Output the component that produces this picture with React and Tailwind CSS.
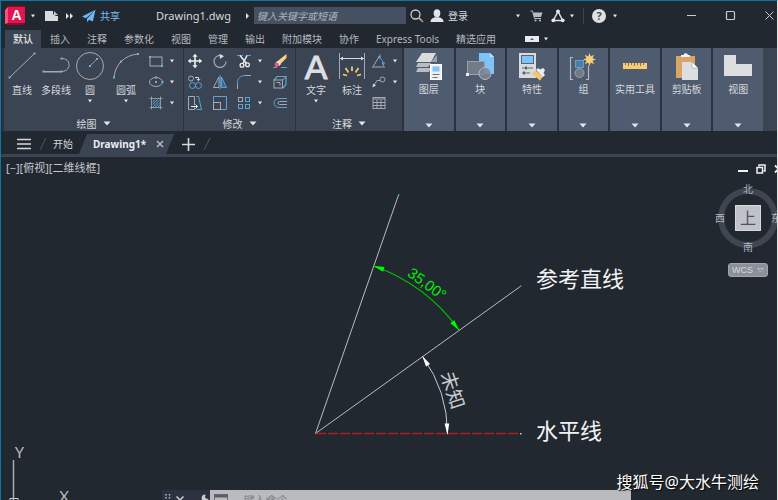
import React from "react";

function Caret({ big = false, className = "" }) {
  return big ? (
    <svg width="8" height="5" viewBox="0 0 8 5" className={className} aria-hidden="true">
      <path d="M.5.5h7L4 4.5z" fill="#e3e5e8" />
    </svg>
  ) : (
    <svg width="6" height="4" viewBox="0 0 6 4" className={className} aria-hidden="true">
      <path d="M1 .5h4L3 3.5z" fill="#e3e5e8" />
    </svg>
  );
}

function Icon({ w = 16, h = 16, children, className = "" }) {
  return (
    <svg
      width={w}
      height={h}
      viewBox={`0 0 ${w} ${h}`}
      fill="none"
      className={`block shrink-0 ${className}`}
      aria-hidden="true"
    >
      {children}
    </svg>
  );
}

function Dot({ x, y }) {
  return <rect x={x - 1} y={y - 1} width="2" height="2" fill="#62b5f0" />;
}

const GREY = "#a6abb3";
const BLUE = "#5aa2d8";

/* ---------- Title bar ---------- */

function TitleBar() {
  return (
    <header className="flex h-[29px] shrink-0 items-center pl-1">
      <button aria-label="应用程序菜单" className="flex items-center">
        <span className="relative flex h-5 w-[21px] items-center justify-center">
          <Icon w={21} h={20} className="absolute inset-0">
            <path d="M3 0h17v17l-3 2H1L0 4z" fill="#8e0b2e" />
            <path d="M3 1h17v16H3z" fill="#e4134f" />
            <path d="M3 1 0 4v14l3-1z" fill="#f0557d" />
          </Icon>
          <span className="relative pb-0.5 pl-0.5 font-['Liberation_Sans',sans-serif] text-[14px] font-bold leading-4 text-white">
            A
          </span>
        </span>
        <Caret className="ml-1" />
      </button>
      <button aria-label="新建" className="ml-2">
        <Icon w={15} h={12}>
          <path d="M1 1h8v3l3 2h2v5H1z" fill="#d9dbdd" />
          <path d="M10 1l4 4h-4z" fill="#c3c6ca" />
        </Icon>
      </button>
      <button aria-label="更多" className="ml-1.5">
        <Icon w={9} h={8}>
          <path d="M1 1l3 3-3 3zM5 1l3 3-3 3z" fill="#e3e5e8" />
        </Icon>
      </button>
      <button className="ml-2 flex items-center gap-1 text-[#7dbdf0]">
        <Icon w={14} h={14}>
          <path d="M13.500.8 0 7.600l4 1.600zM13.500.8 5 9.700v3.500l2-2.500 3.800 1.900z" fill="#6cb8f5" />
        </Icon>
        <span>共享</span>
      </button>
      <h1 className="ml-9 text-[11px] text-[#d5d8dc]">Drawing1.dwg</h1>
      <Icon w={5} h={8} className="ml-3.5">
        <path d="M1 1l3 3-3 3z" fill="#e3e5e8" />
      </Icon>
      <input
        type="text"
        aria-label="搜索"
        placeholder="键入关键字或短语"
        className="ml-1 h-[17px] w-[152px] shrink-0 bg-[#465063] px-[3px] text-[10px] italic leading-4 text-[#d5d8dc] outline-none placeholder:text-[#aeb4be]"
      />
      <button aria-label="查找" className="ml-1">
        <Icon w={14} h={14}>
          <circle cx="5.500" cy="5.500" r="4.500" stroke="#c9ccd0" strokeWidth="1.300" />
          <path d="M9 9l2 2" stroke="#c9ccd0" strokeWidth="1.500" />
          <path d="M10.500 10.500l2.500 2.500" stroke="#c58f55" strokeWidth="1.700" />
        </Icon>
      </button>
      <button className="ml-1.5 flex items-center gap-1 text-[#d5d8dc]">
        <Icon w={14} h={14}>
          <ellipse cx="7" cy="4.200" rx="3.300" ry="3.900" fill="#e3e5e8" />
          <path d="M.5 13c0-3 2.500-4.300 4.500-4.800h4c2 .5 4.500 1.800 4.500 4.800z" fill="#e3e5e8" />
        </Icon>
        <span>登录</span>
      </button>
      <div className="flex flex-1 items-center justify-end gap-2 pr-[68px]">
        <button aria-label="登录选项" className="mr-px">
          <Caret />
        </button>
        <button aria-label="购物车">
          <Icon w={13} h={12}>
            <path d="M.5 1h2l2 7.500h6.500" stroke="#b9bdc2" />
            <path d="M3 2.500h9.500l-1.500 4.500H4.300z" fill="#b9bdc2" />
            <circle cx="5.500" cy="10.500" r="1.100" fill="#b9bdc2" />
            <circle cx="10" cy="10.500" r="1.100" fill="#b9bdc2" />
          </Icon>
        </button>
        <button aria-label="应用商店" className="flex items-center gap-1">
          <Icon w={14} h={14}>
            <path d="M7 2.500l4.700 9H2.300z" stroke="#dfe1e4" strokeWidth="1.500" />
            <circle cx="7" cy="2.400" r="1.900" fill="#e6e8ea" />
            <circle cx="2.300" cy="11.300" r="1.900" fill="#e6e8ea" />
            <circle cx="11.700" cy="11.300" r="1.900" fill="#e6e8ea" />
          </Icon>
          <Caret />
        </button>
        <span className="h-4 w-px bg-[#3b4453]" />
        <button aria-label="帮助" className="flex items-center gap-1.5">
          <span className="flex size-[14px] items-center justify-center rounded-full bg-[#dfe1e3] text-[11px] font-bold leading-none text-[#4a505b]">
            ?
          </span>
          <Caret />
        </button>
      </div>
      <div className="flex items-center gap-7">
        <button aria-label="最小化">
          <Icon w={11} h={11}>
            <path d="M1 5.500h9" stroke="#c9ccd0" />
          </Icon>
        </button>
        <button aria-label="最大化">
          <Icon w={11} h={11}>
            <rect x="1.500" y="1.500" width="8" height="8" rx="1" stroke="#c9ccd0" strokeWidth="1.200" />
          </Icon>
        </button>
        <button aria-label="关闭" className="pr-0.5">
          <Icon w={11} h={11}>
            <path d="M1.500 1.500l8 8M9.500 1.500l-8 8" stroke="#c9ccd0" />
          </Icon>
        </button>
      </div>
    </header>
  );
}

/* ---------- Ribbon tabs ---------- */

const TABS = ["默认", "插入", "注释", "参数化", "视图", "管理", "输出", "附加模块", "协作", "Express Tools", "精选应用"];

function RibbonTabs() {
  return (
    <nav className="flex h-[18px] shrink-0 items-center gap-px pl-1 text-[#b4b8bf]">
      {TABS.map((t, i) => (
        <button
          key={t}
          className={
            i === 0
              ? "h-full bg-[#3b4453] px-2 font-medium text-[#e3e5e8]"
              : "h-full whitespace-nowrap px-2"
          }
        >
          {t}
        </button>
      ))}
      <button aria-label="功能区显示" className="ml-5 flex items-center gap-1">
        <Icon w={14} h={6}>
          <rect width="14" height="6" fill="#e8eaec" />
          <path d="M5 4h4L7 2z" fill="#555b66" />
        </Icon>
        <Caret />
      </button>
    </nav>
  );
}

/* ---------- Ribbon ---------- */

function BigTool({ icon, label, caret, width }) {
  return (
    <button className={`flex flex-col items-center whitespace-nowrap ${width}`}>
      {icon}
      <span className="mt-0.5 leading-4">{label}</span>
      {caret && <Caret className="mt-px" />}
    </button>
  );
}

function SmallTool({ name, caret, children }) {
  return (
    <button aria-label={name} className="flex h-[21px] items-center gap-1">
      <Icon>{children}</Icon>
      {caret && <Caret className="ml-px" />}
    </button>
  );
}

function Panel({ title, width, children }) {
  return (
    <section className={`flex shrink-0 flex-col justify-between bg-[#3b4453] pt-0.5 ${width}`}>
      <div className="flex items-start">{children}</div>
      <button className="flex h-[15px] items-center justify-center gap-1.5">
        <span>{title}</span>
        <Caret big />
      </button>
    </section>
  );
}

function DrawPanel() {
  return (
    <Panel title="绘图" width="w-[179px]">
      <BigTool
        label="直线"
        width="w-9"
        icon={
          <Icon w={28} h={30}>
            <path d="M1.500 27.500 26.500 3.500" stroke={GREY} />
            <Dot x={1.500} y={27.500} />
            <Dot x={26.500} y={3.500} />
          </Icon>
        }
      />
      <BigTool
        label="多段线"
        width="w-8"
        icon={
          <Icon w={28} h={30}>
            <path d="M1.500 21.500h18c10 0 10-13 .5-13" stroke={GREY} />
            <path d="M2 22h17" stroke={GREY} />
            <Dot x={1.500} y={21.500} />
            <Dot x={19.500} y={21.500} />
            <Dot x={19.500} y={8.500} />
          </Icon>
        }
      />
      <BigTool
        label="圆"
        caret
        width="w-9"
        icon={
          <Icon w={30} h={30}>
            <circle cx="15" cy="16" r="13.500" stroke={GREY} />
            <path d="M15 16l7-7" stroke={BLUE} />
            <Dot x={15} y={16} />
            <Dot x={22} y={9} />
          </Icon>
        }
      />
      <BigTool
        label="圆弧"
        caret
        width="w-9"
        icon={
          <Icon w={28} h={30}>
            <path d="M2 27.500C3 15 12 5 26.500 4" stroke={GREY} />
            <Dot x={2} y={27.500} />
            <Dot x={9} y={11.500} />
            <Dot x={26} y={4} />
          </Icon>
        }
      />
      <div className="flex flex-col pl-1">
        <SmallTool name="矩形" caret>
          <rect x="2" y="4" width="12" height="9" stroke={GREY} />
          <Dot x={2} y={4} />
          <Dot x={14} y={13} />
        </SmallTool>
        <SmallTool name="椭圆" caret>
          <ellipse cx="8" cy="8" rx="6.500" ry="4.500" stroke={GREY} />
          <Dot x={8} y={8} />
          <Dot x={14.500} y={8} />
          <Dot x={8} y={3.500} />
        </SmallTool>
        <SmallTool name="图案填充" caret>
          <path d="M3.500 1.500v13M12.500 1.500v13M1.500 3.500h13M1.500 12.500h13" stroke={GREY} strokeOpacity=".8" />
          <path d="M4.500 7l2.500-2.500M4.500 9.500l5-5M5 12l7-7.500M7.500 12l4.500-4.500M10 12l2-2" stroke={BLUE} />
        </SmallTool>
      </div>
    </Panel>
  );
}

function ModifyPanel() {
  return (
    <Panel title="修改" width="w-[111px]">
      <div className="flex pl-[3px]">
        <div className="flex w-[25px] flex-col">
          <SmallTool name="移动">
            <path d="M8 2.500v11M2.500 8h11" stroke="#eceef0" strokeWidth="1.600" />
            <path d="M8 .8l2.600 3H5.400zM8 15.200l2.600-3H5.400zM.8 8l3-2.600v5.200zM15.200 8l-3-2.600v5.200z" fill="#eceef0" />
          </SmallTool>
          <SmallTool name="复制">
            <circle cx="4" cy="4.500" r="2.500" stroke={GREY} />
            <path d="M8 3.500h3.500V6M9.800 5l1.700 1.700L13.200 5" stroke="#d5d8dc" />
            <circle cx="5.500" cy="11.500" r="3" stroke={BLUE} />
            <circle cx="11.500" cy="11.500" r="3" stroke={BLUE} />
          </SmallTool>
          <SmallTool name="拉伸">
            <path d="M7.500 10V1.500h-6v13h6V12.500" stroke={GREY} />
            <path d="M9.500 1.500h2l3 13h-5" stroke={BLUE} />
            <path d="M4 11.500h6M8.500 9.500l2 2-2 2" stroke="#eceef0" />
          </SmallTool>
        </div>
        <div className="flex w-6 flex-col">
          <SmallTool name="旋转">
            <path d="M10.500 3A6 6 0 1 0 14 8.500" stroke={GREY} strokeWidth="1.200" />
            <path d="M7.500.8l4.500 2.400-4 2.800z" fill="#d5d8dc" />
          </SmallTool>
          <SmallTool name="镜像">
            <path d="M7 3v10.500H1.500z" stroke={GREY} />
            <path d="M9.500 3v10.500H14.500z" stroke={BLUE} fill="#3f668a" />
            <path d="M8.200 1v14" stroke={BLUE} />
          </SmallTool>
          <SmallTool name="缩放">
            <path d="M1.500 7V1.500h13v13H8" stroke={BLUE} />
            <rect x="1.500" y="7.500" width="7" height="7" stroke={GREY} />
          </SmallTool>
        </div>
        <div className="flex w-9 flex-col">
          <SmallTool name="修剪" caret>
            <path d="M1 2.500h6M10 2.500h5" stroke={BLUE} />
            <path d="M4 2.500l6.500 8M11 2.500L7 10.500" stroke="#eceef0" strokeWidth="1.500" />
            <circle cx="6" cy="12.200" r="1.900" stroke="#eceef0" strokeWidth="1.300" />
            <circle cx="11.500" cy="11.700" r="1.900" stroke="#eceef0" strokeWidth="1.300" />
          </SmallTool>
          <SmallTool name="圆角" caret>
            <path d="M1.500 15V9C1.500 4.500 4.500 1.500 9 1.500" stroke={BLUE} />
            <path d="M1.500 15v-4M9 1.500h6" stroke={GREY} />
          </SmallTool>
          <SmallTool name="阵列" caret>
            <rect x="2.500" y="2.500" width="4" height="4" stroke={GREY} />
            <rect x="9.500" y="2.500" width="4" height="4" stroke={BLUE} />
            <rect x="2.500" y="9.500" width="4" height="4" stroke={BLUE} />
            <rect x="9.500" y="9.500" width="4" height="4" stroke={BLUE} />
          </SmallTool>
        </div>
        <div className="flex flex-col">
          <SmallTool name="删除">
            <path d="M1 14.500h4M9 14.500h6" stroke={BLUE} />
            <path d="M14.500 1v4L8 11.500 5 8.500z" fill="#f7d184" />
            <path d="M5.500 8l3.500 3-2 2-3.500-3z" fill="#eceef0" />
            <circle cx="4.800" cy="11.800" r="2.200" fill="#ee5775" />
          </SmallTool>
          <SmallTool name="分解">
            <path d="M2 6l3-3.500h9v8L11 14" stroke={BLUE} strokeWidth="1.200" />
            <rect x="2" y="6" width="8.500" height="8" stroke={GREY} />
            <path d="M10.500 6L14 2.500M4.500 8.500H8v3" stroke={GREY} />
          </SmallTool>
          <SmallTool name="偏移">
            <path d="M15 3.500H6.500a4.500 4.500 0 0 0 0 9H15" stroke={BLUE} />
            <path d="M15 6.500H7.500a1.500 1.500 0 0 0 0 3H15" stroke={GREY} />
          </SmallTool>
        </div>
      </div>
    </Panel>
  );
}

function AnnotatePanel() {
  return (
    <Panel title="注释" width="w-[106px]">
      <BigTool
        label="文字"
        caret
        width="w-10"
        icon={
          <span className="flex h-[30px] items-center pt-1 font-['Liberation_Sans',sans-serif] text-[34px] leading-[30px] text-[#dddfe2] [-webkit-text-stroke:1px_#dddfe2]">
            A
          </span>
        }
      />
      <BigTool
        label="标注"
        width="w-8"
        icon={
          <Icon w={28} h={30}>
            <path d="M1.500 3v26M26.500 3v26" stroke={GREY} />
            <path d="M2 8.500h24" stroke="#d5d8dc" />
            <path d="M2 8.500l3-2v4zM26 8.500l-3-2v4z" fill="#d5d8dc" />
            <path
              d="M14 21v-4.500M10.500 22.500L7.500 18M17.500 22.500l3-4.500M9 25.500l-4-1M19 25.500l4-1"
              stroke="#f7c873"
              strokeWidth="1.800"
            />
          </Icon>
        }
      />
      <div className="flex flex-col pl-[3px]">
        <SmallTool name="角度" caret>
          <path d="M9.500 1.500L2 13.500" stroke={GREY} />
          <path d="M1 14h13" stroke={GREY} />
          <path d="M8 4c3 2 4.500 5 4.500 9" stroke={BLUE} />
          <path d="M7 3l3.500.5L8.500 6zM10.500 9.500h3.500l-1.500 3.500z" fill={BLUE} />
        </SmallTool>
        <SmallTool name="引线" caret>
          <circle cx="11.500" cy="5.500" r="2.500" stroke={GREY} />
          <path d="M9 6.500H6L2.500 12" stroke={GREY} />
          <path d="M1.500 13.500l.5-4 3 2z" fill="#d5d8dc" />
        </SmallTool>
        <SmallTool name="表格">
          <rect x="2" y="2.500" width="12" height="11" stroke={GREY} />
          <path d="M2 4h12M2 7.500h12M2 10.500h12M6 5v8M10 5v8" stroke={GREY} />
        </SmallTool>
      </div>
    </Panel>
  );
}

const BLOCKS = [
  {
    label: "图层",
    icon: (
      <Icon w={28} h={29}>
        <path d="M7 1h14l-5 9H1z" fill="#d9dbdd" />
        <path d="M3 11l-2 4h12l3-4zM3 16l-2 4h13l2-4z" fill="#b9bdc3" />
        <path d="M16 10l6-7v7z" fill="#9aa1ab" />
        <rect x="15.500" y="12.500" width="11" height="15" fill="#eceef0" stroke="#fff" />
        <rect x="17.500" y="14.500" width="7" height="5" fill="#7cc4fa" />
        <path d="M17.500 22.500h7M17.500 25.500h5" stroke="#6c7480" />
      </Icon>
    ),
  },
  {
    label: "块",
    icon: (
      <Icon w={28} h={29}>
        <path d="M13 1h11l4 4v17H13z" fill="#7cc4fa" />
        <path d="M24 1v4h4z" fill="#bfe1fb" />
        <rect x="1.500" y="9.500" width="17" height="13" fill="#737b88" stroke="#9aa1ab" />
        <circle cx="19" cy="21.500" r="6" fill="#7d8795" fillOpacity=".85" stroke="#b4b9c1" />
        <rect y="21" width="3" height="3" fill="#eceef0" />
      </Icon>
    ),
  },
  {
    label: "特性",
    icon: (
      <Icon w={28} h={29}>
        <path d="M1 1h17v25H1z" fill="#d9dbdd" />
        <rect x="3.500" y="3.500" width="12" height="8" fill="#7cc4fa" stroke="#5b6472" />
        <path d="M4 16h11M4 21h8" stroke="#5b6472" />
        <path d="M8 14.500v3M6 19.500v3" stroke="#5b6472" strokeWidth="2" />
        <path d="M13.500 21.500l4-3 7.500 6-3 4z" fill="#f5c771" />
        <path d="M18 18l2-2 2 1.500 3-1.500 2 2-1.500 3 1.500 2-2 2z" fill="#eceef0" />
      </Icon>
    ),
  },
  {
    label: "组",
    icon: (
      <Icon w={28} h={29}>
        <path d="M4 5.500H1.500v22H4M17 27.500h2.500v-14" stroke="#b4b9c1" strokeWidth="1.200" />
        <rect x="6.500" y="8.500" width="8" height="7" fill="#4d7da6" stroke={BLUE} />
        <circle cx="10.500" cy="21" r="4.500" fill="#737b88" stroke="#9aa1ab" />
        <path
          d="M20.500 1l1.300 3.500 3.400-1.700-1.700 3.400L27 7.500l-3.500 1.300 1.700 3.400-3.400-1.700L20.500 14l-1.300-3.500-3.400 1.700 1.700-3.400L14 7.500l3.500-1.300-1.700-3.400 3.400 1.700z"
          fill="#f9d07c"
        />
      </Icon>
    ),
  },
  {
    label: "实用工具",
    icon: (
      <Icon w={28} h={29}>
        <rect x="2" y="11" width="24" height="6" fill="#f9cb74" />
        <path d="M4.500 11v2M7.500 11v3M10.500 11v2M13.500 11v3M16.500 11v2M19.500 11v3M22.500 11v2" stroke="#8a7142" />
      </Icon>
    ),
  },
  {
    label: "剪贴板",
    icon: (
      <Icon w={28} h={29}>
        <rect x="3" y="4" width="19" height="22" fill="#d9a466" />
        <path d="M8 5V3h2.500c.5-2.500 4-2.500 4.500 0H17v2z" fill="#f1f2f3" />
        <path d="M9 10h10l6 6v12H9z" fill="#dcdee0" />
        <path d="M19 10v6h6z" fill="#fff" stroke="#8a919c" strokeWidth=".5" />
      </Icon>
    ),
  },
  {
    label: "视图",
    icon: (
      <Icon w={28} h={29}>
        <path d="M0 3h12v9h16v12H0z" fill="#dcdee0" />
      </Icon>
    ),
  },
];

function Ribbon() {
  return (
    <div className="flex h-[83px] shrink-0 gap-0.5 bg-[#2b323d] text-[#d5d8dc]">
      <div className="ml-[3px] flex gap-px">
        <DrawPanel />
        <ModifyPanel />
        <AnnotatePanel />
      </div>
      <div className="flex flex-1 bg-[#3b4453] pr-3.5">
        <div className="grid flex-1 grid-cols-7 gap-0.5 bg-[#2b323d]">
          {BLOCKS.map((b) => (
            <button
              key={b.label}
              className="flex flex-col items-center whitespace-nowrap bg-[#4f5b6e] pb-[3px] pt-1"
            >
              {b.icon}
              <span className="leading-4">{b.label}</span>
              <Caret big className="mt-auto" />
            </button>
          ))}
        </div>
      </div>
    </div>
  );
}

/* ---------- Document tabs ---------- */

function Slash() {
  return (
    <Icon w={8} h={14}>
      <path d="M7 1L1 13" stroke="#4c5667" />
    </Icon>
  );
}

function DocumentTabs() {
  return (
    <nav className="flex h-[26px] shrink-0 items-end border-b-[3px] border-[#3b4453] pt-[3px]">
      <div className="flex h-5 items-center pl-4">
        <button aria-label="菜单">
          <Icon w={14} h={12}>
            <path d="M0 1.500h14M0 6h14M0 10.500h14" stroke="#d5d8dc" strokeWidth="1.600" />
          </Icon>
        </button>
        <span className="mx-2 mr-1.5">
          <Slash />
        </span>
        <button className="text-[#d5d8dc]">开始</button>
      </div>
      <div className="ml-1.5 flex h-5 items-center gap-2.5 bg-[#3b4453] pl-3.5 pr-2.5 [clip-path:polygon(8px_0,100%_0,calc(100%-8px)_100%,0_100%)]">
        <button className="font-bold text-[#eceef0]">Drawing1*</button>
        <button aria-label="关闭图形">
          <Icon w={8} h={8}>
            <path d="M1 1l6 6M7 1L1 7" stroke="#b4b9c1" strokeWidth="1.500" />
          </Icon>
        </button>
      </div>
      <div className="flex h-5 items-center gap-2 pl-2">
        <button aria-label="新图形">
          <Icon w={13} h={13}>
            <path d="M6.500 0v13M0 6.500h13" stroke="#d5d8dc" strokeWidth="1.600" />
          </Icon>
        </button>
        <Slash />
      </div>
    </nav>
  );
}

/* ---------- Model space ---------- */

function Drawing() {
  return (
    <svg
      width="777"
      height="343"
      viewBox="1 157 777 343"
      fill="none"
      className="absolute left-0 top-0"
      role="img"
      aria-label="角度标注"
    >
      <path d="M315.500 433.500L398.500 195" stroke="#b9bcc0" />
      <path d="M315.500 433.500L521 286" stroke="#b9bcc0" />
      <path d="M316 433.500H521" stroke="#b01c22" strokeWidth="1.500" strokeDasharray="10 2" />
      <rect x="520" y="433" width="1.500" height="1.500" fill="#c9ccd0" />
      <rect x="398" y="194" width="1.500" height="1.500" fill="#1db954" />
      <rect x="520" y="285.500" width="1.500" height="1.500" fill="#1db954" />

      <path d="M373.500 266A177 177 0 0 1 459 330" stroke="#00c400" strokeWidth="1.200" />
      <path d="M373 265.800l11.500 1.200-1.500 4.700zM459.300 330.500l-9-7.200 4-3z" fill="#00f800" />
      <text
        x="427"
        y="289"
        fontSize="15"
        textAnchor="middle"
        transform="rotate(36 427 284)"
        fill="#00f000"
        className="font-['Liberation_Sans',sans-serif]"
      >
        35,00°
      </text>

      <path d="M422.500 356.500A132 132 0 0 1 447.500 434" stroke="#c9ccd0" />
      <path d="M422.300 356l3.700 10.500 4-2.500zM447.500 435l-2.900-11.500h4.600z" fill="#fff" />
      <text
        x="453"
        y="397"
        fontSize="19"
        textAnchor="middle"
        transform="rotate(72 453 390)"
        fill="#c9ccd0"
      >
        未知
      </text>

      <text x="536" y="287" fontSize="22" fill="#f1f2f3">
        参考直线
      </text>
      <text x="536" y="439" fontSize="22" fill="#f1f2f3">
        水平线
      </text>
    </svg>
  );
}

function UcsIcon() {
  return (
    <svg
      width="80"
      height="60"
      viewBox="0 0 80 60"
      fill="none"
      className="absolute -bottom-1 left-0 font-['Lato',sans-serif]"
      role="img"
      aria-label="坐标系"
    >
      <text x="18.500" y="14" fontSize="15" textAnchor="middle" fill="#b9bcc0">
        Y
      </text>
      <path d="M12.500 16v44" stroke="#a6abb3" strokeWidth="1.500" />
      <rect x="9" y="54.500" width="8" height="8" stroke="#c9ccd0" />
      <text x="63" y="58" fontSize="15" textAnchor="middle" fill="#b9bcc0">
        X
      </text>
    </svg>
  );
}

function ViewCube() {
  return (
    <div className="absolute -right-1 top-6 flex w-[66px] flex-col items-center text-[#b4b8bf]">
      <div className="relative flex h-[74px] w-full flex-col items-center justify-between">
        <span className="absolute left-[3px] top-[7px] size-[60px] rounded-full border-[6px] border-[#3f4651]" />
        <button className="relative leading-4">北</button>
        <div className="relative flex w-full items-center justify-between">
          <button className="leading-4">西</button>
          <button className="size-[26px] border border-[#d5d8dc] bg-[#bfc3c9] text-[16px] leading-6 text-[#4c525d]">
            上
          </button>
          <button className="leading-4">东</button>
        </div>
        <button className="relative leading-4">南</button>
      </div>
      <button className="mt-2 flex h-[14px] w-10 items-center justify-center gap-1 rounded-[3px] border border-[#a0a4ad] bg-[#8b909b] font-['Liberation_Sans',sans-serif] text-[9px] text-[#d5d8dc]">
        WCS
        <svg width="7" height="5" viewBox="0 0 7 5" fill="none" aria-hidden="true">
          <path d="M.5.5h6L3.500 4z" stroke="#b4b9c1" />
        </svg>
      </button>
    </div>
  );
}

function CommandLine() {
  return (
    <div className="absolute -bottom-2.5 left-[161px] right-[146px] flex h-5 bg-[#2c3240]">
      <div className="flex w-12 items-center gap-1 px-0.5">
        <Icon w={7} h={14}>
          <path d="M2 1v13M5.500 1v13" stroke="#b4b9c1" strokeWidth="1.500" strokeDasharray="1.500 1.500" />
        </Icon>
        <button aria-label="关闭命令行">
          <Icon w={10} h={10}>
            <path d="M1.500 1.500l7 7M8.500 1.500l-7 7" stroke="#c9ccd0" strokeWidth="1.500" />
          </Icon>
        </button>
        <button aria-label="自定义" className="ml-2">
          <Icon w={12} h={14}>
            <path d="M1 13l5.500-6" stroke="#c9ccd0" strokeWidth="2.500" />
            <path d="M8.500 1.500A3.500 3.500 0 1 0 11.500 6L9 5.500 8 4z" fill="#c9ccd0" />
          </Icon>
        </button>
      </div>
      <label className="flex flex-1 items-center gap-3.5 bg-[#b9bbbe] pl-1">
        <Icon w={14} h={12}>
          <rect x=".5" y=".5" width="13" height="11" stroke="#6c7078" />
          <path d="M0 2h14" stroke="#5b5f67" strokeWidth="3" />
        </Icon>
        <input
          type="text"
          aria-label="命令"
          placeholder="键入命令"
          className="w-full bg-transparent text-[11px] italic leading-4 outline-none placeholder:text-[#7b7f86]"
        />
      </label>
    </div>
  );
}

function ModelSpace() {
  return (
    <main className="relative flex-1 overflow-hidden">
      <div className="relative z-10 flex items-start justify-between pl-[5px] pt-[3px]">
        <button className="text-[11px] leading-4 text-[#c3c6cb]">[−][俯视][二维线框]</button>
        <div className="-mr-[7px] flex gap-2 pt-1">
          <button aria-label="最小化视口">
            <Icon w={10} h={10}>
              <path d="M0 7h10" stroke="#f1f2f3" strokeWidth="2" />
            </Icon>
          </button>
          <button aria-label="还原视口">
            <Icon w={10} h={10}>
              <path d="M3 2.500V1h6v6H7.500" stroke="#f1f2f3" strokeWidth="1.500" />
              <rect x="1" y="3.500" width="5.500" height="5.500" stroke="#f1f2f3" strokeWidth="1.500" />
            </Icon>
          </button>
          <button aria-label="关闭视口">
            <Icon w={10} h={10}>
              <path d="M1 1.500l7 7M8 1.500l-7 7" stroke="#f1f2f3" strokeWidth="1.800" />
            </Icon>
          </button>
        </div>
      </div>
      <Drawing />
      <UcsIcon />
      <ViewCube />
      <CommandLine />
      <p className="absolute bottom-1.5 right-[18px] text-[16px] leading-6 text-white [text-shadow:1px_1px_1px_#000]">
        搜狐号@大水牛测绘
      </p>
    </main>
  );
}

export default function App() {
  return (
    <div className="flex h-screen flex-col overflow-hidden border-l border-r border-t border-l-[#0d76a8] border-r-[#e3e5e8] border-t-[#0d76a8] bg-[#222830] font-['Noto_Sans','Noto_Sans_CJK_SC',sans-serif] text-[10px] leading-4">
      <TitleBar />
      <RibbonTabs />
      <Ribbon />
      <DocumentTabs />
      <ModelSpace />
    </div>
  );
}
